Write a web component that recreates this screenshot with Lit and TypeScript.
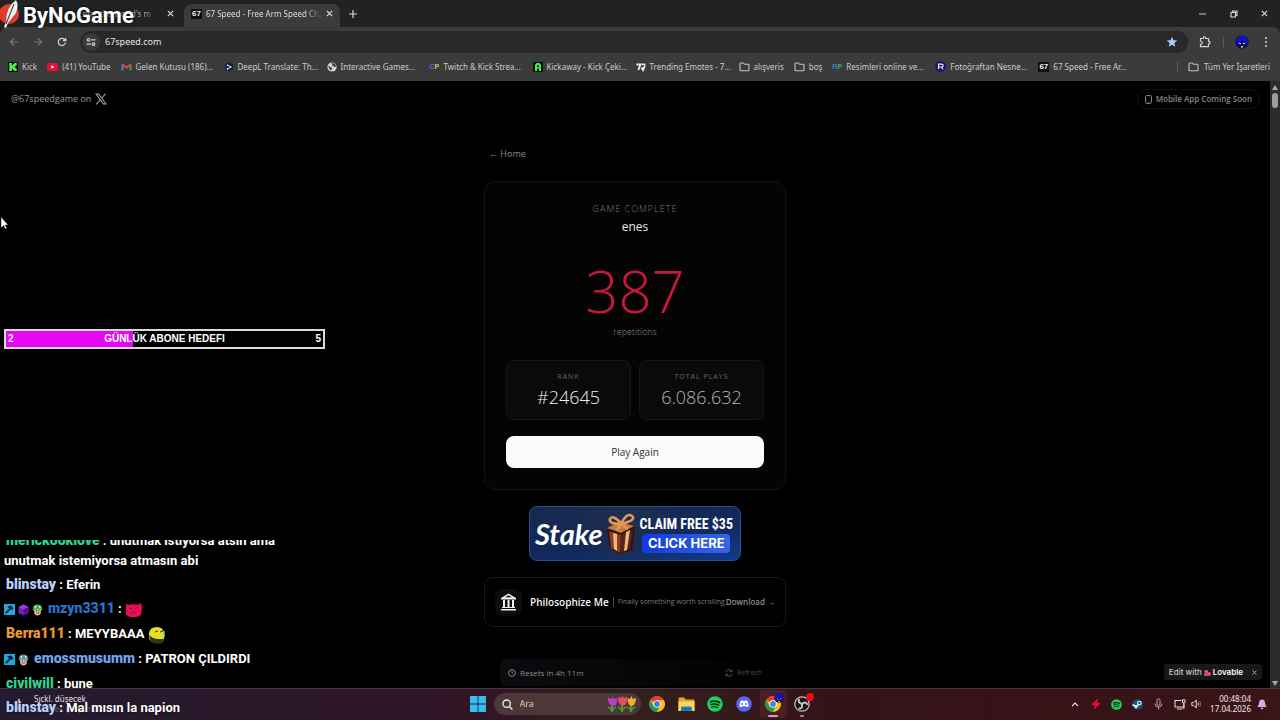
import { LitElement, html, css, svg, TemplateResult } from "lit";
import { customElement } from "lit/decorators.js";

const icon = (w: number, h: number, box: string, body: TemplateResult) =>
  html`<svg class="icon" width=${w} height=${h} viewBox=${box} aria-hidden="true">${body}</svg>`;

const close = icon(7, 7, "0 0 8 8", svg`<path d="M1 1l6 6M7 1l-6 6" stroke="#dcdcdc" stroke-width="1.3"/>`);
const badge67 = html`<span class="fav67">67</span>`;
const folder = icon(11, 10, "0 0 11 10", svg`<path d="M1 8V2q0-1 1-1h2.2l1.2 1.3H9.2q.8 0 .8.9V8q0 .8-.8.8H1.8Q1 8.800 1 8z" fill="none" stroke="#c4c4c4" stroke-width="1.1"/>`);
const globe = icon(10, 10, "0 0 10 10", svg`<circle cx="5" cy="5" r="4.600" fill="#d6d6d6"/><path d="M1.500 3.500l2 1.800 1.200.2.500 1-1 1.800-1-.300L1.500 5zM4 1.300l1.500 1.200-.5 1 2.300 1.200 1.700.200-.500-2.200-1.500-1.400z" fill="#3b3b3b"/>`);
const chrome = (s: number) => icon(s, s, "0 0 16 16", svg`
  <circle cx="8" cy="8" r="7.800" fill="#fbc116"/>
  <path d="M8 8L1.250 4.100A7.800 7.800 0 0 1 14.760 4.100z" fill="#e33b2e"/>
  <path d="M1.250 4.100A7.800 7.800 0 0 0 8 15.800L11.400 9.900 4.600 9.900z" fill="#219a4b"/>
  <path d="M8 4.300h6.850A7.800 7.800 0 0 1 8 15.800l3.400-5.900z" fill="#fbc116"/>
  <circle cx="8" cy="8" r="3.800" fill="#fff"/><circle cx="8" cy="8" r="2.900" fill="#3f7fe8"/>`);
const spotify = (s: number) => icon(s, s, "0 0 16 16", svg`
  <circle cx="8" cy="8" r="7.800" fill="#1ed05c"/>
  <g fill="none" stroke="#0c2415" stroke-linecap="round"><path d="M3.600 5.700q4.500-1.300 9 .9" stroke-width="1.700"/><path d="M4 8.400q4-1.100 7.700.8" stroke-width="1.400"/><path d="M4.300 11q3.500-.900 6.500.7" stroke-width="1.200"/></g>`);
const avatar = (s: number) => icon(s, s, "0 0 14 14", svg`
  <circle cx="7" cy="7" r="6.600" fill="#0a0a3a"/><circle cx="7" cy="6.400" r="5.700" fill="#1010d0"/>
  <path d="M3 7.500q4-2 8 0l-1 3q-3 1.500-6 0z" fill="#07071f"/><path d="M4 8l2 1M10 8l-2 1" stroke="#e4e8ff" stroke-width="1.100"/><path d="M6 11h2v1.700H6z" fill="#c9b78a"/>`);
const clapBadge = icon(11, 11, "0 0 11 11", svg`<path d="M0 0h11v11H0z" fill="#1ba8dc"/><path d="M3.200 2.600L7 1.400 9.400 4.600 7.800 6 6.700 5.300 2.500 9.800 1.200 8.600 5.200 4.400z" fill="#06222f"/>`);
const cube = icon(11, 12, "0 0 11 12", svg`<path d="M5.500.5l5 2.500v6l-5 2.500-5-2.500V3z" fill="#7620ba"/><path d="M5.500.5l5 2.500-5 2.500-5-2.500z" fill="#9a3be0"/><path d="M5.500 5.500v6l5-2.500V3z" fill="#51118b"/>`);
const mushroom = (c: string) => icon(11, 12, "0 0 11 12", svg`<path d="M.7 5.500Q1 .6 5.500.6t4.800 4.900q-.300 1.500-2 1.300H2.700Q1 7 .7 5.500z" fill=${c}/><circle cx="3.300" cy="2.800" r="1" fill="#eee"/><circle cx="7.800" cy="2.800" r="1" fill="#eee"/><path d="M2.300 5.500h6.400v4q-1 2-3.200 2t-3.200-2z" fill="#dfc6a0"/><path d="M4 6.700h1M6.300 6.700h1" stroke="#222"/><path d="M3.800 9h3.600" stroke="#a33546"/>`);

const bookmarks: { label: string; kind: string; art: TemplateResult }[] = [
  { label: "Kick", kind: "", art: icon(10, 10, "0 0 10 10", svg`<path d="M0 0h10v10H0z" fill="#0b160b"/><path d="M1.300 1h2.600v2.200H5V2h1V1h2.700v2.500h-1V4.600H6.600v.8h1.100v1.100h1V9H6V8H5V6.800H3.900V9H1.300z" fill="#4cf04a"/>`) },
  { label: "(41) YouTube", kind: "", art: icon(11, 10, "0 0 11 10", svg`<rect x="0" y="1" width="11" height="8" rx="2.200" fill="#e60e33"/><path d="M4.300 3.200L7.600 5 4.300 6.800z" fill="#fff"/>`) },
  { label: "Gelen Kutusu (186)...", kind: "capped", art: icon(11, 10, "0 0 11 10", svg`<path d="M1.500 8.500V2.500" stroke="#4b83e8" stroke-width="1.900"/><path d="M9.500 8.500V2.500" stroke="#32a654" stroke-width="1.900"/><path d="M1.200 2.300l4.300 3.500 4.300-3.500" fill="none" stroke="#e2443a" stroke-width="1.900"/>`) },
  { label: "DeepL Translate: Th...", kind: "capped", art: icon(10, 10, "0 0 10 10", svg`<path d="M5 .3l4 2.300v4.800L5 9.700 1 7.400V2.600z" fill="#102042"/><path d="M3.500 3.200l3.300 1.900-3.300 1.800" fill="none" stroke="#cbd8f4" stroke-width="1"/><circle cx="3.500" cy="3.200" r=".8" fill="#fff"/><circle cx="6.800" cy="5.100" r=".8" fill="#fff"/><circle cx="3.500" cy="6.900" r=".8" fill="#fff"/>`) },
  { label: "Interactive Games...", kind: "capped", art: globe },
  { label: "Twitch & Kick Strea...", kind: "capped", art: html`<span class="favcp"><b>C</b>P</span>` },
  { label: "Kickaway - Kick Çeki...", kind: "capped", art: icon(10, 10, "0 0 10 10", svg`<path d="M0 0h10v10H0z" fill="#061206"/><path d="M2 9V3l1.500-2h3L8 3v6H6V6.500H4V9z" fill="#47ec4c"/><path d="M4 3.500h2V5H4z" fill="#092109"/>`) },
  { label: "Trending Emotes - 7...", kind: "capped", art: icon(10, 10, "0 0 10 10", svg`<path d="M.5 2.500h4L2.300 8M5.500 5.500L7 8l2-4.500M6 2.300h1.500M8.500 1.500v1.500" fill="none" stroke="#f4f4f4" stroke-width="1.800"/>`) },
  { label: "alışveris", kind: "", art: folder },
  { label: "boş", kind: "", art: folder },
  { label: "Resimleri online ve...", kind: "capped", art: html`<span class="favrp"><b>R</b>P</span>` },
  { label: "Fotoğraftan Nesne...", kind: "capped", art: icon(11, 11, "0 0 11 11", svg`<circle cx="5.500" cy="5.500" r="5.300" fill="#1d0b74"/><path d="M3.500 8.300V3.200h3.100q1.500 0 1.500 1.400T6.600 6H4M6.300 6l1.700 2.300" fill="none" stroke="#efeaff" stroke-width="1.200"/>`) },
  { label: "67 Speed - Free Ar...", kind: "capped", art: badge67 },
];

const faceRed = icon(18, 20, "0 1 18 20", svg`<path d="M1 5l3 1 4-1 4 1 4-2 1 5-1 7-4 2H5l-4-2z" fill="#e80d55"/><path d="M4 9l3 1M13 8l-3 2M6 14q3-2 5 0" stroke="#8b0634" fill="none"/>`);
const faceYellow = icon(18, 20, "0 1 18 20", svg`<path d="M1 9q1-6 8-6 6 0 7 6v7q-3 3-8 3-6-1-7-5z" fill="#e6df22"/><path d="M1 11q4 4 9 4h6l-1 4q-7 2-12-1z" fill="#34341f"/><path d="M7 8l3-1M12 8l3-1" stroke="#37330a"/><path d="M16 7v6" stroke="#65cfe0" stroke-width="1.500"/>`);

const chat: { who: string; tone: string; text: string; badges?: TemplateResult[]; emote?: TemplateResult }[] = [
  { who: "merickooklove", tone: "green", text: "unutmak istiyorsa atsın ama unutmak istemiyorsa atmasın abi" },
  { who: "blinstay", tone: "pale", text: "Eferin" },
  { who: "mzyn3311", tone: "blue", text: "", badges: [clapBadge, cube, mushroom("#3fb34a")], emote: faceRed },
  { who: "Berra111", tone: "orange", text: "MEYYBAAA", emote: faceYellow },
  { who: "emossmusumm", tone: "sky", text: "PATRON ÇILDIRDI", badges: [clapBadge, mushroom("#4e8fae")] },
  { who: "civilwill", tone: "green", text: "bune" },
  { who: "blinstay", tone: "pale", text: "Mal mısın la napion" },
];

const base = css`
  :host, * { box-sizing: border-box; }
  button, input { font: inherit; color: inherit; background: none; border: 0; padding: 0; margin: 0; outline: 0; }
  button { display: inline-flex; align-items: center; justify-content: center; }
  a { color: inherit; text-decoration: none; }
  p, h1, h2, dl, dd, dt, ul { margin: 0; padding: 0; }
  .icon { display: block; flex: none; }
`;

@customElement("browser-chrome")
class BrowserChrome extends LitElement {
  static styles = [base, css`
    :host { display: block; background: #202322; color: #d4d4d4; font: 9px/12px "Noto Sans", sans-serif; white-space: nowrap; }
    .tabs { display: flex; height: 27px; align-items: flex-end; font-size: 8px; }
    .tab { display: flex; align-items: center; height: 23px; padding: 0 7px 4px; gap: 4px; border-radius: 8px 8px 0 0; }
    .tab.idle { width: 184px; color: #a5a5a5; padding-right: 10px; justify-content: flex-end; gap: 9px; }
    .tab.active { width: 156px; background: #3b3b3b; color: #dedede; }
    .tab button { padding: 2px 0; }
    .title { overflow: hidden; flex: 1; -webkit-mask-image: linear-gradient(90deg, #000 85%, transparent); mask-image: linear-gradient(90deg, #000 85%, transparent); }
    .idle .title { flex: none; width: 80px; }
    .new { width: 26px; height: 23px; padding-bottom: 4px; }
    .window { margin-left: auto; display: flex; align-self: stretch; }
    .window button { width: 31px; }
    .fav67 { flex: none; width: 11px; height: 10px; background: #101010; color: #f0f0f0; font: 700 8px/10px "Liberation Sans", sans-serif; text-align: center; }
    .toolbar { display: flex; align-items: center; height: 29px; padding: 0 2px; background: #3b3b3b; border-radius: 8px 8px 0 0; }
    .toolbar > button { width: 24px; height: 24px; }
    .omni { flex: 1; display: flex; align-items: center; height: 22px; margin: 0 5px 0 6px; padding: 0 10px 0 2px; gap: 5px; background: #282828; border-radius: 11px; font-size: 9px; }
    .omni input { flex: 1; min-width: 0; color: #e4e4e4; }
    .tune { width: 18px; height: 18px; border-radius: 9px; background: #3a3a3a; }
    .sep { width: 1px; height: 10px; background: #5d5d5d; }
    .toolbar .sep { margin: 0 6px; }
    .marks { display: flex; align-items: center; height: 25px; padding: 0 10px 4px 8px; gap: 10px; background: #3b3b3b; font-size: 8px; color: #cbcbcb; }
    .marks a { display: flex; align-items: center; gap: 4px; flex: none; }
    .marks .capped { width: 93px; }
    .marks .all { gap: 5px; }
    .marks .sep { margin-left: auto; }
    .favcp, .favrp { width: 10px; font: 700 7px/10px "Liberation Sans", sans-serif; color: #e5b257; }
    .favcp b { color: #4577de; }
    .favrp { color: #35b080; } .favrp b { color: #3ea0d4; font-weight: 400; }
  `];
  render() {
    return html`
      <div class="tabs">
        <div class="tab idle"><span class="title">Enter the world's m</span><button aria-label="Close tab">${close}</button></div>
        <div class="tab active">${badge67}<span class="title">67 Speed - Free Arm Speed Cha</span><button aria-label="Close tab">${close}</button></div>
        <button class="new" aria-label="New tab">${icon(8, 8, "0 0 8 8", svg`<path d="M4 0v8M0 4h8" stroke="#d8d8d8" stroke-width="1.200"/>`)}</button>
        <div class="window">
          <button aria-label="Minimize">${icon(8, 8, "0 0 8 8", svg`<path d="M0 4h7" stroke="#c8c8c8"/>`)}</button>
          <button aria-label="Restore">${icon(8, 8, "0 0 8 8", svg`<path d="M1 2.500h4.500v4.500H1zM2.500 2V1h4.500v4.500H6" fill="none" stroke="#dcdcdc" stroke-width="1.100"/>`)}</button>
          <button aria-label="Close">${close}</button>
        </div>
      </div>
      <div class="toolbar">
        <button aria-label="Back">${icon(10, 10, "0 0 10 10", svg`<path d="M9 5H1.500M5 1.500L1.500 5 5 8.500" fill="none" stroke="#777" stroke-width="1.200"/>`)}</button>
        <button aria-label="Forward">${icon(10, 10, "0 0 10 10", svg`<path d="M1 5h7.500M5 1.500L8.500 5 5 8.500" fill="none" stroke="#777" stroke-width="1.200"/>`)}</button>
        <button aria-label="Reload">${icon(10, 10, "0 0 10 10", svg`<path d="M8.500 5.500A3.600 3.600 0 1 1 7.600 2.500L8.500 3.500M8.700 1v2.700H6" fill="none" stroke="#d4d4d4" stroke-width="1.200"/>`)}</button>
        <div class="omni">
          <button class="tune" aria-label="Site information">${icon(10, 10, "0 0 10 10", svg`<g fill="none" stroke="#d0d0d0" stroke-width="1.200"><circle cx="2.500" cy="2.800" r="1.300"/><path d="M5.200 2.800H9.500M.5 7.200h4.300"/><circle cx="7.500" cy="7.200" r="1.300"/></g>`)}</button>
          <input aria-label="Address" value="67speed.com" />
          <button aria-label="Bookmark">${icon(12, 12, "0 0 12 12", svg`<path d="M6 .8l1.500 3.500 3.800.3-2.900 2.500.9 3.700L6 8.800l-3.300 2 .9-3.700L.7 4.600l3.800-.3z" fill="#a9cbf8"/>`)}</button>
        </div>
        <button aria-label="Extensions">${icon(12, 12, "0 0 12 12", svg`<path d="M1.500 2.500h2.700q0-1.600 1.300-1.600t1.300 1.600h2.700v2.700q1.600 0 1.600 1.300T9.500 7.800v2.900h-8V8.400Q3.200 8.200 3.200 6.700T1.500 5z" fill="none" stroke="#d2d2d2" stroke-width="1.200"/>`)}</button>
        <span class="sep"></span>
        <button class="me" aria-label="Profile">${avatar(14)}</button>
        <button aria-label="Menu">${icon(4, 12, "0 0 4 12", svg`<g fill="#dcdcdc"><circle cx="2" cy="2" r="1"/><circle cx="2" cy="6" r="1"/><circle cx="2" cy="10" r="1"/></g>`)}</button>
      </div>
      <nav class="marks">
        ${bookmarks.map((b) => html`<a href="#" class=${b.kind}>${b.art}<span>${b.label}</span></a>`)}
        <span class="sep"></span>
        <a href="#" class="all">${folder}<span>Tüm Yer İşaretleri</span></a>
      </nav>`;
  }
}

@customElement("game-page")
class GamePage extends LitElement {
  static styles = [base, css`
    :host { display: flex; min-height: 0; overflow: hidden; background: #000; color: #8a8a8a; font: 9px/12px "Open Sans", "Noto Sans", sans-serif; }
    .page { position: relative; flex: 1; min-width: 0; }
    .top { display: flex; justify-content: space-between; align-items: center; padding: 8px 10px 0 11px; }
    .handle { display: flex; align-items: center; gap: 4px; color: #9a9a9a; font-size: 9px; }
    .soon { display: flex; align-items: center; gap: 4px; height: 20px; padding: 0 7px; border: 1px solid #131313; border-radius: 10px; font-size: 8px; font-weight: 600; color: #888; }
    .column { width: 302px; max-width: 100%; margin: 39px auto 0; display: flex; flex-direction: column; }
    .home { align-self: flex-start; margin: 0 0 21px 5px; color: #8a8a8a; }
    .card { border: 1px solid #131313; border-radius: 11px; background: #040404; padding: 20px 21px 21px; text-align: center; }
    .eyebrow { font-size: 9px; font-weight: 300; line-height: 14px; letter-spacing: 1px; color: #7a7a7a; }
    .name { font-size: 12px; line-height: 22px; color: #e4e4e4; font-weight: 400; }
    .score { margin-top: 21px; font-size: 58px; line-height: 64px; font-weight: 300; color: #c8173f; }
    .unit { margin-top: 2px; font-weight: 300; line-height: 14px; color: #8a8a8a; }
    .stats { display: grid; grid-template-columns: 1fr 1fr; gap: 8px; margin-top: 21px; }
    .stat { border: 1px solid #171717; border-radius: 8px; background: #0a0a0a; height: 60px; padding-top: 9px; }
    .stat dt { font-size: 7px; line-height: 14px; letter-spacing: 1px; color: #6a6a6a; }
    .stat dd { font-size: 18px; line-height: 26px; font-weight: 300; color: #f0f0f0; }
    .stat.total dd { color: #b4b4b4; }
    .again { width: 100%; height: 32px; margin-top: 16px; border-radius: 8px; background: #fafafa; color: #303030; font-size: 10px; font-weight: 400; }
    .stake { display: flex; align-items: center; align-self: center; justify-content: space-between; width: 212px; height: 55px; margin-top: 16px; padding: 0 7px 0 5px; border: 1px solid #2b4d91; border-radius: 8px; background: radial-gradient(circle at 45% 30%, #202f4d, transparent 45%), linear-gradient(170deg, #172a4c, #11295c 60%, #123b8d); color: #fff; }
    .brand { font: italic 700 29px/40px "Lato", sans-serif; }
    .offer { display: flex; flex-direction: column; align-items: center; gap: 1px; }
    .claim { font: 700 14px/18px "Liberation Sans Narrow", "Roboto Condensed", "DejaVu Sans Condensed", sans-serif; white-space: nowrap; }
    .click { width: 88px; border-radius: 4px; background: linear-gradient(90deg, #1338e0, #3568e3); font: 700 13px/19px "Inter", sans-serif; text-align: center; white-space: nowrap; }
    .promo { display: flex; align-items: center; height: 50px; margin-top: 16px; padding: 0 10px; border: 1px solid #181818; border-radius: 9px; white-space: nowrap; }
    .temple { display: grid; place-items: center; width: 27px; height: 27px; margin-right: 8px; border-radius: 8px; background: #0d0d0d; }
    .promo h2 { font: 600 10px/14px "Open Sans", sans-serif; color: #f4f4f4; }
    .bar { width: 1px; height: 10px; margin: 0 4px; background: #4a4a4a; }
    .tag { font-size: 7px; flex: 1; min-width: 0; color: #7c7c7c; }
    .get { font-size: 8px; font-weight: 600; color: #8f8f8f; }
    .reset { display: flex; align-items: center; justify-content: space-between; height: 27px; margin: 32px 16px 0; padding: 0 8px; border-radius: 6px; background: linear-gradient(90deg, #0b0c0f, #040406 70%, #000); font-size: 8px; font-weight: 400; }
    .reset span, .reset button { display: flex; align-items: center; gap: 4px; }
    .reset button { color: #484848; font-size: 7px; }
    .edit { position: absolute; right: 8px; bottom: 8px; display: flex; align-items: center; height: 16px; padding: 0 5px; border-radius: 3px; background: #181818; color: #c8c8c8; font: 500 8px/12px "Inter", sans-serif; }
    .edit a { display: flex; align-items: center; gap: 2px; }
    .edit b { color: #fff; font-weight: 600; }
    .edit button { margin-left: 9px; }
    .scroll { width: 10px; display: flex; flex-direction: column; align-items: center; padding: 4px 0 2px; background: #2c2c2c; }
    .thumb { width: 6px; height: 15px; margin: 3px 0 auto; border-radius: 3px; background: #9d9d9d; }
  `];
  render() {
    return html`
      <main class="page">
        <div class="top">
          <a class="handle" href="#">@67speedgame on ${icon(12, 12, "0 0 12 12", svg`<path d="M1 1h2.600L11 11H8.400zM10.500.8L6.800 5M5.200 7L1.200 11.300" fill="none" stroke="#a2a2a2" stroke-width="1.100"/>`)}</a>
          <span class="soon">${icon(7, 9, "0 0 7 9", svg`<rect x=".6" y=".6" width="5.800" height="7.800" rx="1" fill="none" stroke="#8a8a8a"/><path d="M3 7h1" stroke="#8a8a8a"/>`)}Mobile App Coming Soon</span>
        </div>
        <div class="column">
          <a class="home" href="#">← Home</a>
          <section class="card">
            <p class="eyebrow">GAME COMPLETE</p>
            <h1 class="name">enes</h1>
            <p class="score">387</p>
            <p class="unit">repetitions</p>
            <dl class="stats">
              <div class="stat"><dt>RANK</dt><dd>#24645</dd></div>
              <div class="stat total"><dt>TOTAL PLAYS</dt><dd>6.086.632</dd></div>
            </dl>
            <button class="again">Play Again</button>
          </section>
          <a class="stake" href="#">
            <span class="brand">Stake</span>
            ${icon(32, 42, "0 0 32 42", svg`
              <path d="M2 17l22-6 6 4-3 22-12 4-10-6z" fill="#2b140e"/>
              <path d="M4 18l12 4-1 18-9-5z" fill="#8b3c20"/><path d="M16 22l12-6-3 20-10 4z" fill="#54241a"/>
              <path d="M2 15l13-6 14 4-13 7z" fill="#c77a43"/><path d="M8 20l4 1v17l-3-2zM21 19l4-2-3 20-3 1z" fill="#f2b777"/>
              <path d="M16 10Q7 1 5 6t11 5Q22-1 27 3t-11 8l-4 6M16 11l7 5" fill="none" stroke="#e09a59" stroke-width="2.600"/>`)}
            <span class="offer"><span class="claim">CLAIM FREE $35</span><span class="click">CLICK HERE</span></span>
          </a>
          <section class="promo">
            <span class="temple">${icon(17, 18, "0 0 17 18", svg`<path d="M8.500.5L16 5v1.500H1V5zM1 16h15v1.500H1zM2 14h13v1H2z" fill="#f2f2f2"/><path d="M8.500 2.200l3.500 2H5z" fill="#0d0d0d"/><path d="M4 7v7M8.500 7v7M13 7v7" stroke="#f2f2f2" stroke-width="2"/>`)}</span>
            <h2>Philosophize Me</h2><span class="bar"></span>
            <p class="tag">Finally something worth scrolling</p>
            <a class="get" href="#">Download →</a>
          </section>
          <div class="reset">
            <span>${icon(8, 8, "0 0 8 8", svg`<circle cx="4" cy="4" r="3.400" fill="none" stroke="#8f8f8f" stroke-width=".9"/><path d="M4 1.800V4l1.500.9" fill="none" stroke="#8f8f8f" stroke-width=".8"/>`)}Resets in 4h 11m</span>
            <button>${icon(8, 8, "0 0 8 8", svg`<path d="M.8 3.400A3.200 3.200 0 0 1 6.800 2.400M7 .5v2.200H4.900M7.200 4.600A3.200 3.200 0 0 1 1.200 5.600M1 7.500V5.300h2.100" fill="none" stroke="#5a5a5a" stroke-width=".9"/>`)}Refresh</button>
          </div>
        </div>
        <div class="edit">
          <a href="#">Edit with ${icon(7, 7, "0 0 7 7", svg`<path d="M.5 7V2.300A1.800 1.800 0 0 1 4 2.300V3h1a1.900 1.900 0 0 1 0 4z" fill="#ef3d6c"/><path d="M.5 7V4l3 3z" fill="#4b73ff"/><path d="M.5 2.500a1.700 1.700 0 0 1 3 0z" fill="#ff8a35"/>`)}<b>Lovable</b></a>
          <button aria-label="Dismiss">${icon(5, 5, "0 0 5 5", svg`<path d="M.5.5l4 4M4.500.5l-4 4" stroke="#c8c8c8" stroke-width=".8"/>`)}</button>
        </div>
      </main>
      <div class="scroll">
        ${icon(6, 5, "0 0 6 5", svg`<path d="M3 0l3 5H0z" fill="#a8a8a8"/>`)}
        <span class="thumb"></span>
        ${icon(6, 5, "0 0 6 5", svg`<path d="M0 0h6L3 5z" fill="#a8a8a8"/>`)}
      </div>`;
  }
}

@customElement("task-bar")
class TaskBar extends LitElement {
  static styles = [base, css`
    :host { display: grid; grid-template-columns: 1fr auto 1fr; align-items: center; height: 32px; padding-bottom: 1px; border-top: 1px solid #493443; background: linear-gradient(90deg, #241b30, #301525 36%, #33201d 50%, #351119 66%, #391517); color: #e6e0e4; font: 8px/10px "Noto Sans", sans-serif; }
    .weather { display: flex; align-items: center; gap: 9px; padding-left: 14px; }
    .weather p + p { color: #675c72; }
    .apps { display: flex; align-items: center; gap: 8px; padding-left: 6px; }
    .search { display: flex; align-items: center; gap: 7px; width: 147px; height: 22px; padding: 0 4px 0 8px; border-radius: 11px; background: #4b3838; font-size: 9px; }
    .search input { flex: 1; min-width: 0; }
    .search input::placeholder { color: #d6cbd0; opacity: 1; }
    .pins { display: flex; margin-left: -6px; }
    .pins button { position: relative; width: 29px; height: 28px; }
    .pins .on { width: 27px; margin: 0 1px; border-radius: 4px; background: #4a2026; }
    .mark { position: absolute; bottom: 1px; width: 10px; height: 2px; border-radius: 1px; background: #d99bc9; }
    .mark.small { width: 4px; background: #a08a94; }
    .over { position: absolute; top: 3px; right: 3px; }
    .tray { display: flex; align-items: center; justify-content: flex-end; padding-right: 13px; }
    .tray button { width: 21px; height: 20px; }
    .clock { margin: 0 5px 0 8px; text-align: right; color: #f1e8ea; }
    .tray .sound { width: 12px; }
    .tray .bell { width: 11px; }
  `];
  render() {
    return html`
      <div class="weather">
        ${icon(11, 13, "0 0 11 13", svg`<path d="M4 1q2-1 2 1v6q2 3-1 4t-3-2l1-2z" fill="#bcb9ca"/><path d="M4.500 4v5" stroke="#ce3156" stroke-width="1.500"/><path d="M8 8q3 3 0 4-2-1 0-4z" fill="#4868ae"/>`)}
        <div><p>Sıckl. düşecek</p><p>Gelecek çarşamba</p></div>
      </div>
      <div class="apps">
        <button aria-label="Start">${icon(16, 16, "0 0 16 16", svg`<path d="M0 0h7.600v7.600H0zM8.400 0H16v7.600H8.400zM0 8.400h7.600V16H0zM8.400 8.400H16V16H8.400z" fill="#39bdf0"/>`)}</button>
        <label class="search">
          ${icon(11, 11, "0 0 11 11", svg`<circle cx="4.700" cy="4.700" r="3.700" fill="none" stroke="#eee" stroke-width="1.300"/><path d="M7.400 7.400l3 3" stroke="#eee" stroke-width="1.400"/>`)}
          <input placeholder="Ara" aria-label="Ara" />
          ${icon(31, 17, "0 0 31 17", svg`
            <g fill="none" stroke="#4f9a36" stroke-width="1.800"><path d="M6 8v8M2 11q3 1 4 4M10 11q-3 1-4 4M16 8v8M12 11q3 1 4 4M20 11q-3 1-4 4M25 8v8M21 11q3 1 4 4M29 11q-3 1-4 4"/></g>
            <path d="M1.500 1.500L5 3l2-2 1.500 2L11 2q1 7-4 8Q2 9 1.500 1.500z" fill="#bd3cc1"/><path d="M12 1l3 1 1.500-2L18 2l3-1q1 8-4.500 9Q12 9 12 1z" fill="#e64b65"/><path d="M21.500 2L24 3l1.500-3L27 3l3-1q0 7-4.500 8-4-1-4-8z" fill="#f2ad29"/>`)}
        </label>
        <div class="pins">
          <button aria-label="Chrome">${chrome(16)}</button>
          <button aria-label="Explorer">${icon(17, 15, "0 0 17 15", svg`<path d="M.5 1.500Q.5.5 1.500.5h4.500l2 2h7.500q1 0 1 1V14H.5z" fill="#e8a322"/><path d="M.5 4.500h16V14H.5z" fill="#fcd45c"/><path d="M3 14V11q0-1.500 1.500-1.500h8Q14 9.500 14 11v3z" fill="#1c83c6"/><path d="M5.500 12h6" stroke="#0d5a98"/>`)}</button>
          <button aria-label="Spotify">${spotify(16)}</button>
          <button aria-label="Discord">${icon(16, 16, "0 0 16 16", svg`<circle cx="8" cy="8" r="7.800" fill="#5965ea"/><path d="M5 4.600l1.500-.400.5.8h2l.5-.800 1.500.4q1.800 3 1.700 5.600l-2.100 1-.7-1H6.100l-.7 1-2.100-1Q3.200 7.600 5 4.600z" fill="#fff"/><circle cx="6.200" cy="8.100" r="1" fill="#5965ea"/><circle cx="9.800" cy="8.100" r="1" fill="#5965ea"/>`)}</button>
          <button class="on" aria-label="Chrome window">${chrome(16)}<span class="over">${avatar(10)}</span><span class="mark"></span></button>
          <button aria-label="OBS">${icon(16, 16, "0 0 16 16", svg`<circle cx="8" cy="8" r="7.200" fill="#171517" stroke="#c9c5c8" stroke-width="1.200"/><path d="M8 8Q3 6 5.500 3M8 8q4-3.500 5.500.8M8 8q1 5-3.500 4.500" fill="none" stroke="#c9c5c8" stroke-width="2"/>`)}<span class="over">${icon(8, 8, "0 0 8 8", svg`<circle cx="4" cy="4" r="3.900" fill="#f30b14"/>`)}</span><span class="mark small"></span></button>
        </div>
      </div>
      <div class="tray">
        <button aria-label="Hidden icons">${icon(8, 5, "0 0 8 5", svg`<path d="M1 4.200l3-3 3 3" fill="none" stroke="#f0e8ea" stroke-width="1.200"/>`)}</button>
        <button aria-label="Power">${icon(10, 12, "0 0 10 12", svg`<path d="M6.500.5L.5 6.500l3 .8L3 11.500l6.500-6-3.200-.8z" fill="#e30c38"/>`)}</button>
        <button aria-label="Spotify">${spotify(11)}</button>
        <button aria-label="Steam">${icon(11, 11, "0 0 11 11", svg`<circle cx="5.500" cy="5.500" r="5.300" fill="#175080"/><circle cx="7.300" cy="4" r="1.800" fill="none" stroke="#f1f5f8" stroke-width="1.100"/><path d="M.5 5.800l4 1.600L6.500 5.500" fill="none" stroke="#f1f5f8" stroke-width="1.500"/><circle cx="4" cy="7.700" r="1.500" fill="#f1f5f8"/>`)}</button>
        <button aria-label="Microphone">${icon(9, 12, "0 0 9 12", svg`<rect x="3" y=".8" width="3" height="6.500" rx="1.500" fill="none" stroke="#c999c4"/><path d="M1 5.500q0 3.500 3.500 3.500T8 5.500M4.500 9v2.500" fill="none" stroke="#c999c4"/>`)}</button>
        <button aria-label="Network">${icon(12, 11, "0 0 12 11", svg`<path d="M7.500 1.500H1v6.500h9V5.500M3 10h5.500" fill="none" stroke="#e5dadd" stroke-width="1.100"/><path d="M8.500.8h2.500v3H8.500zM9.800 4v6" fill="none" stroke="#e5dadd"/>`)}</button>
        <button class="sound" aria-label="Volume">${icon(11, 10, "0 0 11 10", svg`<path d="M.8 3.600h1.700L5.300 1v8L2.500 6.400H.8z" fill="none" stroke="#e5dadd"/><path d="M7 3.500q1 1.500 0 3" fill="none" stroke="#e5dadd"/><path d="M8.600 2q2 3 0 6" fill="none" stroke="#8b6e72"/>`)}</button>
        <div class="clock"><p>00:48:04</p><p>17.04.2026</p></div>
        <button class="bell" aria-label="Notifications">${icon(10, 11, "0 0 10 11", svg`<path d="M5 .5q3 0 3 3.500 0 2 1.700 4H.3Q2 6 2 4 2 .5 5 .5z" fill="#e3a6e6"/><path d="M3.500 8.800h3q-.3 1.500-1.500 1.500T3.500 8.800z" fill="#e3a6e6"/>`)}</button>
      </div>`;
  }
}

@customElement("stream-overlay")
class StreamOverlay extends LitElement {
  static styles = [base, css`
    :host { position: absolute; inset: 0; pointer-events: none; color: #fff; }
    .logo { position: absolute; left: 0; top: 0; display: flex; align-items: flex-start; font: 700 22px/32px "Roboto", sans-serif; text-shadow: 0 0 3px #000; }
    .goal { position: absolute; left: 4px; top: 329px; width: 321px; height: 20px; display: flex; align-items: center; justify-content: space-between; padding: 0 2px; border: 2px solid #dadada; background: linear-gradient(90deg, #e308f4 40%, #000 40%); font: 700 10px/14px "Liberation Sans", sans-serif; }
    .pointer { position: absolute; left: 0; top: 216px; }
    .chat { position: absolute; left: 4px; bottom: 0; width: 284px; height: 180px; padding-bottom: 2px; overflow: hidden; display: flex; flex-direction: column; justify-content: flex-end; gap: 4px; list-style: none; font: 700 13px/20px "Roboto", sans-serif; text-shadow: 0 0 2px #000; }
    .chat li { flex: none; }
    .chat .rich { height: 21px; }
    .chat .icon { display: inline-block; vertical-align: middle; margin: -4px 3px -4px 0; }
    .chat b { margin-left: 2px; font-size: 14px; line-height: 14px; }
    .green { color: #2fd391; } .pale { color: #b9d1fb; } .blue { color: #2b70c9; } .orange { color: #ee972b; } .sky { color: #74a3e8; }
  `];
  render() {
    return html`
      <div class="logo">
        ${icon(23, 28, "0 0 23 28", svg`<circle cx="9" cy="14" r="10" fill="#df3c2d"/><path d="M16 0q3 5 0 13L8 23l-2 5-2-1 2-5Q6 7 16 0z" fill="#f2f2f2"/><path d="M14 4L6 24" stroke="#4f4b4a" stroke-width="1.200"/>`)}
        <span>ByNoGame</span>
      </div>
      <svg class="pointer" width="9" height="14" viewBox="0 0 9 14" aria-hidden="true"><path d="M1 1v11l2.600-2.400L5.300 13l1.500-.7-1.600-3.300h3z" fill="#fff" stroke="#222" stroke-width=".5"/></svg>
      <div class="goal"><span>2</span><span>GÜNLÜK ABONE HEDEFI</span><span>5</span></div>
      <ul class="chat">
        ${chat.map((m) => html`<li class=${m.badges || m.emote ? "rich" : ""}>${m.badges ?? ""}<b class=${m.tone}>${m.who}</b> : ${m.text} ${m.emote ?? ""}</li>`)}
      </ul>`;
  }
}

@customElement("app-root")
class AppRoot extends LitElement {
  static styles = css`
    :host { position: relative; display: flex; flex-direction: column; height: 100vh; overflow: hidden; background: #000; }
    game-page { flex: 1; }
  `;
  render() {
    return html`<browser-chrome></browser-chrome><game-page></game-page><task-bar></task-bar><stream-overlay></stream-overlay>`;
  }
}
